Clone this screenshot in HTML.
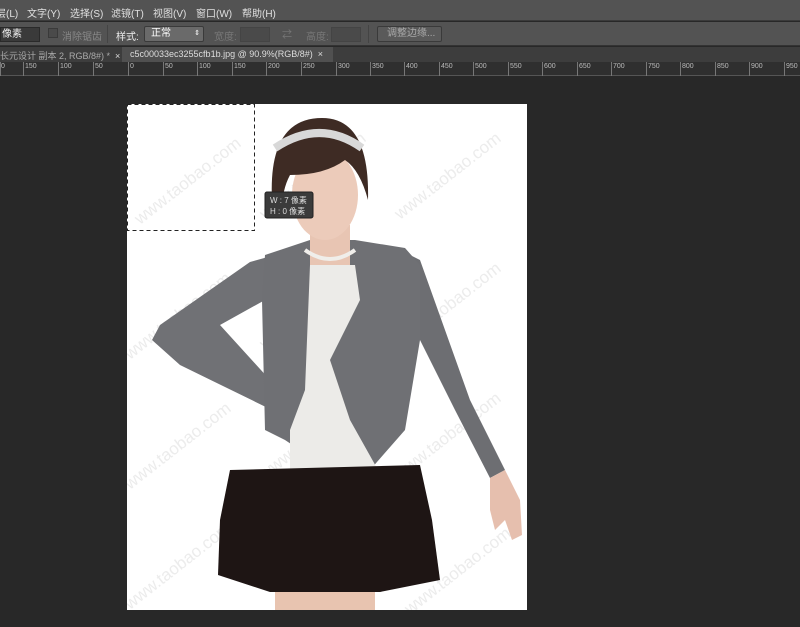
<!DOCTYPE html>
<html><head><meta charset="utf-8"><style>
*{margin:0;padding:0;box-sizing:border-box}
body{width:800px;height:627px;overflow:hidden;background:#282828;font-family:"Liberation Sans","Noto Sans CJK SC",sans-serif;position:relative;color:#ddd}
.abs{position:absolute}
#menu{left:0;top:0;width:800px;height:21px;background:#535353;border-bottom:1px solid #3a3a3a;font-size:10px;color:#e0e0e0}
#menu span{position:absolute;top:5px}
#tool{left:0;top:22px;width:800px;height:24px;background:#535353;border-bottom:1px solid #333;font-size:10px}
#tabs{left:0;top:47px;width:800px;height:15px;background:#3d3d3d;font-size:9px;color:#aaa}
#ruler{left:0;top:62px;width:800px;height:14px;background:#2f2f2f;border-bottom:1px solid #555;font-size:7px;color:#bbb}
#ruler span{position:absolute;top:1px}
#ruler i{position:absolute;top:0;width:1px;height:14px;background:#777}
</style></head><body>
<div id="menu" class="abs">
<span style="left:-4px">层(L)</span><span style="left:27px">文字(Y)</span><span style="left:70px">选择(S)</span><span style="left:111px">滤镜(T)</span><span style="left:153px">视图(V)</span><span style="left:196px">窗口(W)</span><span style="left:242px">帮助(H)</span>
</div>
<div id="tool" class="abs">
<div class="abs" style="left:0;top:5px;width:40px;height:15px;background:#3a3a3a;border:1px solid #2a2a2a;color:#eee;padding-left:1px;line-height:13px">像素</div>
<div class="abs" style="left:48px;top:6px;width:10px;height:10px;background:#4a4a4a;border:1px solid #3a3a3a"></div>
<div class="abs" style="left:62px;top:6px;color:#888">消除锯齿</div>
<div class="abs" style="left:107px;top:3px;width:1px;height:18px;background:#444"></div>
<div class="abs" style="left:116px;top:6px;color:#eee">样式:</div>
<div class="abs" style="left:144px;top:4px;width:60px;height:16px;background:#6a6a6a;border:1px solid #3a3a3a;border-radius:2px;color:#fff;padding-left:6px;line-height:14px">正常<span style="position:absolute;right:3px;font-size:7px">⇕</span></div>
<div class="abs" style="left:214px;top:6px;color:#777">宽度:</div>
<div class="abs" style="left:240px;top:5px;width:30px;height:15px;background:#4a4a4a;border:1px solid #444"></div>
<div class="abs" style="left:282px;top:4px;color:#777">⇄</div>
<div class="abs" style="left:306px;top:6px;color:#777">高度:</div>
<div class="abs" style="left:331px;top:5px;width:30px;height:15px;background:#4a4a4a;border:1px solid #444"></div>
<div class="abs" style="left:368px;top:3px;width:1px;height:18px;background:#444"></div>
<div class="abs" style="left:377px;top:4px;width:65px;height:16px;background:#5a5a5a;border:1px solid #3a3a3a;border-radius:2px;color:#aaa;padding-left:9px;line-height:14px">调整边缘...</div>
</div>
<div id="tabs" class="abs">
<div class="abs" style="left:0;top:2px;white-space:nowrap">长元设计 副本 2, RGB/8#) * &nbsp;<span style="color:#ddd">×</span></div>
<div class="abs" style="left:122px;top:0;width:211px;height:15px;background:#505050;color:#ddd;padding-left:8px;padding-top:2px;white-space:nowrap">c5c00033ec3255cfb1b.jpg @ 90.9%(RGB/8#) &nbsp;×</div>
</div>
<div id="ruler" class="abs">
<i style="left:0"></i><span style="left:1px">0</span>
<i style="left:23px"></i><span style="left:25px">150</span>
<i style="left:58px"></i><span style="left:60px">100</span>
<i style="left:93px"></i><span style="left:95px">50</span>
<i style="left:128px"></i><span style="left:130px">0</span>
<i style="left:163px"></i><span style="left:165px">50</span>
<i style="left:197px"></i><span style="left:199px">100</span>
<i style="left:232px"></i><span style="left:234px">150</span>
<i style="left:266px"></i><span style="left:268px">200</span>
<i style="left:301px"></i><span style="left:303px">250</span>
<i style="left:336px"></i><span style="left:338px">300</span>
<i style="left:370px"></i><span style="left:372px">350</span>
<i style="left:404px"></i><span style="left:406px">400</span>
<i style="left:439px"></i><span style="left:441px">450</span>
<i style="left:473px"></i><span style="left:475px">500</span>
<i style="left:508px"></i><span style="left:510px">550</span>
<i style="left:542px"></i><span style="left:544px">600</span>
<i style="left:577px"></i><span style="left:579px">650</span>
<i style="left:611px"></i><span style="left:613px">700</span>
<i style="left:646px"></i><span style="left:648px">750</span>
<i style="left:680px"></i><span style="left:682px">800</span>
<i style="left:715px"></i><span style="left:717px">850</span>
<i style="left:749px"></i><span style="left:751px">900</span>
<i style="left:784px"></i><span style="left:786px">950</span>
</div>
<svg class="abs" style="left:0;top:0" width="800" height="627" viewBox="0 0 800 627">
<defs><clipPath id="c"><rect x="127" y="104" width="400" height="506"/></clipPath></defs>
<rect x="127" y="104" width="400" height="506" fill="#fff"/>
<g clip-path="url(#c)">
<g font-family="Liberation Sans" font-size="17" fill="#ececec">
<text transform="translate(140,225) rotate(-38)">www.taobao.com</text>
<text transform="translate(265,220) rotate(-38)">www.taobao.com</text>
<text transform="translate(400,220) rotate(-38)">www.taobao.com</text>
<text transform="translate(130,360) rotate(-38)">www.taobao.com</text>
<text transform="translate(265,350) rotate(-38)">www.taobao.com</text>
<text transform="translate(400,350) rotate(-38)">www.taobao.com</text>
<text transform="translate(130,490) rotate(-38)">www.taobao.com</text>
<text transform="translate(265,480) rotate(-38)">www.taobao.com</text>
<text transform="translate(400,480) rotate(-38)">www.taobao.com</text>
<text transform="translate(130,610) rotate(-38)">www.taobao.com</text>
<text transform="translate(410,615) rotate(-38)">www.taobao.com</text>
</g>
<rect x="275" y="575" width="100" height="35" fill="#e8c4b0"/>
<path d="M400 250 L420 260 L445 330 L470 400 L505 470 L490 478 L455 410 L420 340 Z" fill="#6d6e72"/>
<path d="M490 478 L505 470 L520 500 L522 535 L512 540 L505 520 L495 530 L490 510 Z" fill="#e6bfae"/>
<path d="M250 262 L275 255 L265 300 L220 325 L270 380 L285 400 L272 410 L180 365 L152 340 L160 325 Z" fill="#707175"/>
<path d="M265 395 L290 395 L290 430 L275 425 Z" fill="#e3b9a5"/>
<path d="M265 255 L310 240 L355 240 L405 248 L420 265 L420 340 L405 430 L370 470 L330 470 L285 440 L265 430 L262 300 Z" fill="#6f7074"/>
<path d="M310 265 L355 265 L360 300 L330 360 L350 420 L378 470 L290 470 L290 430 L305 390 Z" fill="#ecebe8"/>
<rect x="310" y="225" width="40" height="40" fill="#e8c5b3"/>
<path d="M305 250 Q330 268 355 250" stroke="#f0eeea" stroke-width="4" fill="none"/>
<ellipse cx="325" cy="195" rx="33" ry="45" fill="#eccbba"/>
<path d="M272 200 Q268 118 322 118 Q370 118 368 200 Q360 170 345 160 Q325 175 290 175 Q282 190 282 210 Z" fill="#3e2b24"/>
<path d="M275 148 Q320 118 362 148" stroke="#d8d8d8" stroke-width="8" fill="none"/>
<path d="M230 470 L420 465 L432 520 L440 580 L380 592 L270 592 L218 575 L220 520 Z" fill="#1e1514"/>
</g>
<rect x="127.5" y="104.5" width="127" height="126" fill="none" stroke="#222" stroke-width="1" stroke-dasharray="4,3"/>
<rect x="265" y="192" width="48" height="26" rx="2" fill="#3b3b3b" stroke="#222"/>
<text x="270" y="203" font-size="8" fill="#ddd" font-family="Liberation Sans,Noto Sans CJK SC,sans-serif">W : 7 像素</text>
<text x="270" y="214" font-size="8" fill="#ddd" font-family="Liberation Sans,Noto Sans CJK SC,sans-serif"> H : 0 像素</text>
</svg>
</body></html>
